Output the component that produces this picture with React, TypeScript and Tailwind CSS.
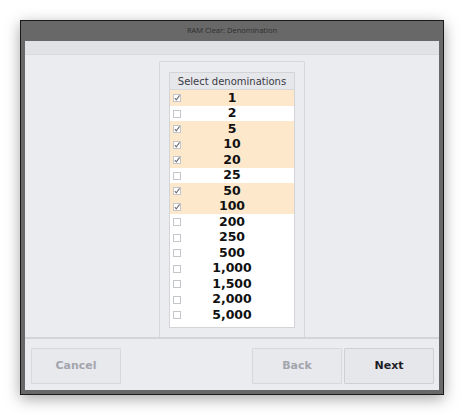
import React from "react";

const rows: { v: string; on: boolean }[] = [
  { v: "1", on: true },
  { v: "2", on: false },
  { v: "5", on: true },
  { v: "10", on: true },
  { v: "20", on: true },
  { v: "25", on: false },
  { v: "50", on: true },
  { v: "100", on: true },
  { v: "200", on: false },
  { v: "250", on: false },
  { v: "500", on: false },
  { v: "1,000", on: false },
  { v: "1,500", on: false },
  { v: "2,000", on: false },
  { v: "5,000", on: false },
];

function Box({ on }: { on: boolean }) {
  return (
    <svg width="8" height="8" viewBox="0 0 8 8" className="shrink-0">
      <rect x="0.5" y="0.5" width="7" height="7" fill="#ffffff" stroke="#c4c6cb" />
      {on && <path d="M1.8 4.2 L3.3 5.8 L6.6 1.4" fill="none" stroke="#6f7075" strokeWidth="1.1" />}
    </svg>
  );
}

export default function App() {
  return (
    <div className="w-[464px] h-[415px] bg-white pt-[20px] pl-[20px]" style={{ fontFamily: '"DejaVu Sans", Verdana, sans-serif' }}>
      <div className="w-[424px] h-[375px] border border-[#1a1a1a] bg-[#686868] flex flex-col shadow-[0_4px_14px_rgba(0,0,0,0.35)]">
        <div className="h-[20px] flex items-center justify-center text-[7.5px] text-[#2e2e2e]" style={{ fontFamily: '"Open Sans", sans-serif' }}>
          RAM Clear: Denomination
        </div>
        <div className="flex-1 px-[4px] pb-[4px] flex flex-col">
          <div className="flex-1 flex flex-col bg-[#ebecf0]">
            <div className="h-[14px] bg-[#e1e2e6] border-b border-[#d8d9dd]"></div>
            <div className="flex-1 flex justify-center pt-[6px]">
              <div className="w-[146px] border-x border-t border-[#d6d7db] rounded-t-[2px] px-[9px] pt-[10px]">
                <div className="border border-[#d3d4d8] bg-white">
                  <div className="h-[17px] bg-[#e6e7eb] flex items-center justify-center text-[10px] text-[#3a3a44] border-b border-[#d6d7db]">
                    Select denominations
                  </div>
                  <div className="pb-[4px]">
                    {rows.map((r) => (
                      <div key={r.v} className={`h-[15.5px] flex items-center relative ${r.on ? "bg-[#fde8cc]" : "bg-white"}`}>
                        <div className="absolute left-[3px] top-[4px]">
                          <Box on={r.on} />
                        </div>
                        <div className="flex-1 text-center font-bold text-[12.5px] leading-none text-[#111111]">{r.v}</div>
                      </div>
                    ))}
                  </div>
                </div>
              </div>
            </div>
            <div className="h-[53px] border-t-2 border-[#d4d5d9] flex items-start pt-[9px] pl-[6px] pr-[5px]">
              <button className="w-[90px] h-[36px] border border-[#d7d8dc] bg-[#e8e9ed] text-[11px] font-bold text-[#a3a5ad] rounded-[1px]">
                Cancel
              </button>
              <div className="flex-1"></div>
              <button className="w-[90px] h-[36px] border border-[#d7d8dc] bg-[#e8e9ed] text-[11px] font-bold text-[#a3a5ad] rounded-[1px]">
                Back
              </button>
              <button className="ml-[2px] w-[90px] h-[36px] border border-[#cfd0d4] bg-[#e6e7eb] text-[11px] font-bold text-[#1e1e28] rounded-[1px]">
                Next
              </button>
            </div>
          </div>
        </div>
      </div>
    </div>
  );
}
